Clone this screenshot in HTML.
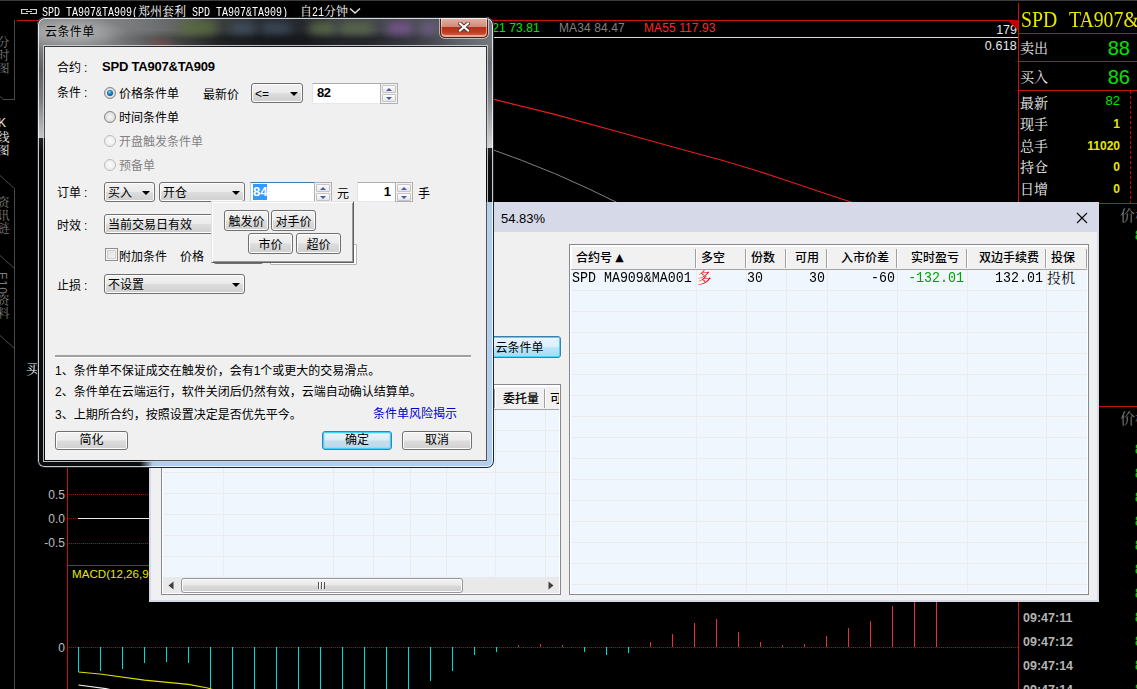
<!DOCTYPE html>
<html lang="zh-CN">
<head>
<meta charset="utf-8">
<title>云条件单</title>
<style>
*{box-sizing:border-box;margin:0;padding:0}
html,body{width:1137px;height:689px;overflow:hidden;background:#000}
body{position:relative;font-family:"Liberation Sans","Noto Sans CJK SC",sans-serif;font-size:12px;color:#000}
.a{position:absolute;white-space:nowrap}
.song{font-family:"Liberation Serif","Noto Serif CJK SC",serif}
.mono{font-family:"Liberation Mono","Noto Serif CJK SC",monospace}
.ui{font-family:"Liberation Sans","Noto Sans CJK SC",sans-serif;font-size:12px;line-height:14px;color:#000}
/* ---------- main app ---------- */
#app{position:absolute;left:0;top:0;width:1137px;height:689px;background:#000;overflow:hidden}
.hl{position:absolute;height:1px}
.vl{position:absolute;width:1px}
.red{background:#c8140c}

.sl{font-family:"Liberation Mono",monospace;font-size:10px;display:inline-block;transform:scaleY(1.25);transform-origin:50% 70%;white-space:pre}
.sc{font-family:"Noto Serif CJK SC",serif;font-size:12px}
.vt{left:-5px;width:14px;writing-mode:vertical-rl;font-family:"Liberation Sans","Noto Serif CJK SC",serif;font-size:12px;line-height:14px;letter-spacing:1px}
.ax{right:1072px;font-size:12px;line-height:14px;color:#bebebe}
.dot{background:repeating-linear-gradient(90deg,#be0000 0 1px,transparent 1px 2px)}
.q1{left:1020px;font-size:14px;line-height:15px;color:#f0f0f0}
.qb{right:7px;font-size:20px;line-height:23px;color:#00e600}
.qv{right:17px;font-size:12px;line-height:14px;font-weight:bold;color:#e6e600}
.gd{left:1135px;font-size:14px;line-height:16px;font-weight:bold;color:#00c800}
.tm{left:1023px;font-size:12.5px;line-height:14px;font-weight:bold;color:#b4b4b4}
/* ---------- light panel ---------- */
#panel{position:absolute;left:149px;top:202px;width:950px;height:400px;background:#d5d9e8;overflow:hidden}
#pbody{position:absolute;left:2px;top:30px;width:946px;height:368px;background:#f0f0f0}
.grid{position:absolute;background:#f0f6fd;border:1px solid #868a90;overflow:hidden}
.grid:after{content:"";position:absolute;left:0;top:0;right:0;bottom:0;border:1px solid #fff;border-top:0;pointer-events:none}
.gh{position:absolute;left:0;top:0;right:0;height:25px;background:#f1f1f1;border-bottom:1px solid #a3a3a3;box-shadow:inset 0 2px 0 #fff,inset 2px 0 0 #fff,inset -1px 0 0 #fff}
.gh span{position:absolute;top:6px;white-space:nowrap;margin-left:-1px;font-size:12px;line-height:14px;color:#000;font-weight:500}
.gh.lg span{top:7px}
.gh i{position:absolute;top:4px;width:1px;height:19px;background:#a0a0a0;box-shadow:1px 0 0 #fff}
.row{position:absolute;left:0;right:0;height:1px;background:#ebebeb}
.col{position:absolute;top:25px;bottom:0;width:1px;background:#ebebeb}
.cell{position:absolute;top:25px;height:21px;line-height:21px;font-size:16px;color:#000}
.cell.mono{top:23px;transform:scaleY(1.12);transform-origin:50% 50%}
/* ---------- dialog ---------- */
#dlg{position:absolute;left:37px;top:17px;width:457px;height:451px;border-radius:8px 8px 7px 7px;overflow:hidden;background:#000}
#glass{position:absolute;left:0;top:0;right:0;bottom:0}
#rim{position:absolute;left:0;top:0;right:0;bottom:0;border-radius:8px 8px 7px 7px;border:1px solid #1c242e;box-shadow:inset 0 0 0 1px rgba(255,255,255,.78);pointer-events:none}
#cframe{position:absolute;left:6px;top:28px;width:445px;height:417px;border:1px solid rgba(255,255,255,.72);background:rgba(8,12,20,.62);padding:1px}
#client{position:absolute;left:8px;top:30px;width:441px;height:413px;background:#f0f0f0;overflow:hidden}
#client .a{font-size:12px;line-height:14px;color:#000}
.btn{position:absolute;border:1px solid #707070;border-radius:3px;background:linear-gradient(#f2f2f2 0%,#ebebeb 48%,#dddddd 52%,#cfcfcf 100%);box-shadow:inset 0 0 0 1px #fcfcfc;text-align:center;font-size:12px;line-height:18px;color:#000;white-space:nowrap}
.cmb{position:absolute;border:1px solid #707070;border-radius:3px;background:linear-gradient(#f2f2f2 0%,#ebebeb 48%,#dddddd 52%,#cfcfcf 100%);box-shadow:inset 0 0 0 1px #fcfcfc;font-size:12px;line-height:20px;color:#000;padding-left:3px;white-space:nowrap;height:20px}
.cmb:after{content:"";position:absolute;right:4px;top:8px;border-style:solid;border-color:#000 transparent transparent transparent;border-width:4.5px 4px 0 4px}
.edit{position:absolute;background:#fff;border:1px solid #e3e9ef;border-top-color:#abadb3;border-left-color:#e2e3ea;border-radius:1px;font-size:13px;font-weight:bold;line-height:18px;white-space:nowrap}
.spin{position:absolute;right:-1px;top:-1px;bottom:-1px;width:18px;border:1px solid #aeb0b5;background:#f3f3f3}
.spin i{position:absolute;left:1px;width:14px;height:8px;border:1px solid #c4c4c4;border-radius:1px;background:linear-gradient(#fdfdfd,#e6e6e6)}
.spin i:after{content:"";position:absolute;left:3px;top:1.5px;border-style:solid;border-width:0 3px 3px 3px;border-color:transparent transparent #4559ae transparent}
.spin i+i:after{border-width:3px 3px 0 3px;border-color:#4559ae transparent transparent transparent;top:2px}
.rad{position:absolute;width:12px;height:12px;border-radius:50%;border:1px solid #868788;background:radial-gradient(circle at 50% 50%,#f8f8f8 0,#e4e5e6 50%,#bfc1c4 100%)}
.rad.on:after{content:"";position:absolute;left:2px;top:2px;width:6px;height:6px;border-radius:50%;background:radial-gradient(circle at 42% 36%,#7ad6f7 0,#1a7aba 42%,#0e2c58 100%)}
.rad.dis{border-color:#bdbebf;background:radial-gradient(circle at 50% 50%,#fbfbfb 0,#f0f0f0 55%,#dfe0e1 100%)}
#closeb{position:absolute;left:403px;top:1px;width:48px;height:20px;border:1px solid #5a1810;border-top:0;border-radius:0 0 5px 5px;background:linear-gradient(#e2b4a8 0%,#d08c7c 45%,#b5301a 50%,#be3e22 75%,#d4714e 100%);box-shadow:inset 0 -1px 0 1px rgba(255,255,255,.45),0 0 0 1px rgba(255,255,255,.55)}
#closeb svg{position:absolute;left:17px;top:4px}
</style>
</head>
<body>
<div id="app">
<!-- top edge -->
<div class="hl" style="left:0;top:0;width:1137px;background:#3c3c3c"></div>
<!-- title -->
<svg class="a" style="left:20px;top:8px" width="18" height="7" viewBox="0 0 18 7" fill="none" stroke="#d2d2d2" stroke-width="1.2"><path d="M8 1.5 H1.6 V5.5 H8"/><path d="M10 1.5 H16.4 V5.5 H10"/><path d="M6 3.5 H12" stroke-width="1"/></svg>
<div class="a" id="ttl" style="left:42px;top:4px;height:14px;line-height:14px;color:#fff;font-size:12px"><span class="sl">SPD TA907&amp;TA909(</span><span class="sc">郑州套利</span><span class="sl"> SPD TA907&amp;TA909)  </span><span class="sc">自</span><span class="sl">21</span><span class="sc">分钟</span></div>
<svg class="a" style="left:349px;top:7px" width="12" height="8" viewBox="0 0 12 8"><path d="M1 1.5 L6 6 L11 1.5" fill="none" stroke="#e6e6e6" stroke-width="1.4"/></svg>
<!-- left tabs -->
<div class="vl" style="left:14px;top:20px;height:80px;background:#4a4a4a"></div>
<div class="hl" style="left:3px;top:99px;width:12px;background:#4a4a4a"></div>
<svg class="a" style="left:0;top:90px" width="16" height="600" viewBox="0 0 16 600" fill="none" stroke="#4a4a4a" stroke-width="1"><path d="M0 6.5 L3.5 9.5"/><path d="M0 85.5 L14.5 98.5 L14.5 600"/><path d="M0 165.5 L14.5 178.5"/><path d="M0 245.5 L14.5 258.5"/></svg>
<div class="a vt" style="top:36px;color:#7d7d7d">分时图</div>
<div class="a vt" style="top:116px;color:#ececec;text-orientation:upright">K线图</div>
<div class="a vt" style="top:196px;color:#7d7d7d">资讯链</div>
<div class="a vt" style="top:272px;color:#7d7d7d;letter-spacing:.6px">F10资料</div>
<div class="a song" style="left:26px;top:363px;font-size:14px;line-height:14px;color:#f0f0f0">买入</div>
<!-- chart frame -->
<div class="hl red" style="left:17px;top:20px;width:1002px"></div>
<div class="vl red" style="left:67px;top:20px;height:669px"></div>
<div class="hl" style="left:68px;top:37px;width:950px;background:#dcdcdc"></div>
<div class="a" style="left:474px;top:21px;font-size:12px;line-height:14px;color:#00e600;letter-spacing:.1px">MA21 73.81</div>
<div class="a" style="left:559px;top:21px;font-size:12px;line-height:14px;color:#808080;letter-spacing:.1px">MA34 84.47</div>
<div class="a" style="left:644px;top:21px;font-size:12px;line-height:14px;color:#ff2828;letter-spacing:.1px">MA55 117.93</div>
<div class="a" style="right:120px;top:23px;font-size:12.5px;line-height:14px;color:#e8e8e8">179</div>
<div class="a" style="right:120px;top:39px;font-size:12.5px;line-height:14px;color:#e8e8e8;letter-spacing:.2px">0.618</div>
<svg class="a" style="left:1007px;top:20px" width="12" height="12" viewBox="0 0 12 12"><path d="M0 0 L12 0 L12 11 Z" fill="#c80000"/></svg>
<svg class="a" style="left:0;top:0" width="1137" height="689" viewBox="0 0 1137 689" fill="none">
<path d="M440 87 L494 99.4 L554.8 114.4 L621.7 132.8 L688.5 151.2 L722 160.2 L755.4 170.2 L788.8 181.3 L822.2 192.6 L860 205" stroke="#e61e1e" stroke-width="1.1"/>
<path d="M440 132 L494 150.2 L521.4 160.2 L554.8 173.6 L588.3 188.6 L620 204" stroke="#808080" stroke-width="1"/>
</svg>
<!-- sub chart 1 -->
<div class="a ax" style="top:488px">0.5</div>
<div class="a ax" style="top:512px">0.0</div>
<div class="a ax" style="top:536px">-0.5</div>
<div class="hl dot" style="left:69px;top:494px;width:949px"></div>
<div class="hl dot" style="left:69px;top:543px;width:949px"></div>
<div class="hl dot" style="left:69px;top:518px;width:9px"></div>
<div class="hl" style="left:78px;top:518px;width:940px;background:#e6e6e6"></div>
<div class="hl red" style="left:68px;top:565px;width:951px"></div>
<div class="a" style="left:72px;top:567px;font-size:11.6px;line-height:14px;color:#e6e600;letter-spacing:0">MACD(12,26,9)</div>
<div class="a ax" style="top:641px">0</div>
<div class="hl dot" style="left:69px;top:647px;width:949px"></div>
<svg class="a" style="left:0;top:0" width="1137" height="689" viewBox="0 0 1137 689" shape-rendering="crispEdges">
<rect x="78" y="647" width="1" height="25" fill="#00dcdc"/><rect x="100" y="647" width="1" height="24" fill="#00dcdc"/><rect x="122" y="647" width="1" height="22" fill="#00dcdc"/><rect x="144" y="647" width="1" height="16" fill="#00dcdc"/><rect x="166" y="647" width="1" height="15" fill="#00dcdc"/><rect x="188" y="647" width="1" height="16" fill="#00dcdc"/><rect x="210" y="647" width="1" height="42" fill="#00dcdc"/><rect x="232" y="647" width="1" height="42" fill="#00dcdc"/><rect x="254" y="647" width="1" height="42" fill="#00dcdc"/><rect x="276" y="647" width="1" height="42" fill="#00dcdc"/><rect x="298" y="647" width="1" height="42" fill="#00dcdc"/><rect x="320" y="647" width="1" height="42" fill="#00dcdc"/><rect x="342" y="647" width="1" height="42" fill="#00dcdc"/><rect x="364" y="647" width="1" height="42" fill="#00dcdc"/><rect x="386" y="647" width="1" height="42" fill="#00dcdc"/><rect x="408" y="647" width="1" height="42" fill="#00dcdc"/><rect x="430" y="647" width="1" height="34" fill="#00dcdc"/><rect x="452" y="647" width="1" height="24" fill="#00dcdc"/><rect x="474" y="647" width="1" height="8" fill="#00dcdc"/><rect x="496" y="647" width="1" height="5" fill="#00dcdc"/><rect x="518" y="645" width="1" height="2" fill="#e63232"/><rect x="540" y="644" width="1" height="3" fill="#e63232"/><rect x="562" y="645" width="1" height="2" fill="#e63232"/><rect x="584" y="647" width="1" height="5" fill="#00dcdc"/><rect x="606" y="647" width="1" height="8" fill="#00dcdc"/><rect x="628" y="647" width="1" height="6" fill="#00dcdc"/><rect x="650" y="642" width="1" height="5" fill="#e63232"/><rect x="672" y="634" width="1" height="13" fill="#e63232"/><rect x="694" y="623" width="1" height="24" fill="#e63232"/><rect x="716" y="619" width="1" height="28" fill="#e63232"/><rect x="738" y="632" width="1" height="15" fill="#e63232"/><rect x="760" y="642" width="1" height="5" fill="#e63232"/><rect x="782" y="645" width="1" height="2" fill="#e63232"/><rect x="804" y="644" width="1" height="3" fill="#e63232"/><rect x="826" y="636" width="1" height="11" fill="#e63232"/><rect x="848" y="628" width="1" height="19" fill="#e63232"/><rect x="870" y="621" width="1" height="26" fill="#e63232"/><rect x="892" y="606" width="1" height="41" fill="#e63232"/><rect x="914" y="590" width="1" height="57" fill="#e63232"/><rect x="936" y="580" width="1" height="67" fill="#e63232"/>
<path d="M78.5 672 L100 674 L144.4 680.2 L188.4 684.4 L207.8 688 L214 690" fill="none" stroke="#dcdc00" stroke-width="1.2" shape-rendering="auto"/><path d="M78.5 685 L105.7 688.6 L112 690" fill="none" stroke="#f0f0f0" stroke-width="1.2" shape-rendering="auto"/>
</svg>
<!-- right quote panel -->
<div class="vl red" style="left:1018px;top:3px;height:686px"></div>
<div class="hl red" style="left:1018px;top:33px;width:119px"></div>
<div class="hl red" style="left:1018px;top:61px;width:119px"></div>
<div class="hl red" style="left:1018px;top:90px;width:119px"></div>
<div class="hl red" style="left:1018px;top:203px;width:119px"></div>
<div class="hl red" style="left:1018px;top:406px;width:119px"></div>
<div class="vl" style="left:1130px;top:91px;height:112px;background:repeating-linear-gradient(#c80000 0 3px,transparent 3px 5px)"></div>
<div class="a song" id="qname" style="left:1021px;top:6.5px;font-size:23px;line-height:26px;color:#e6e600;transform:scaleX(.86);transform-origin:0 0;word-spacing:8.2px">SPD TA907&amp;TA909</div>
<div class="a song q1" style="top:41px">卖出</div>
<div class="a song q1" style="top:70px">买入</div>
<div class="a qb" style="top:37px">88</div>
<div class="a qb" style="top:66px">86</div>
<div class="a song q1" style="top:96px">最新</div>
<div class="a song q1" style="top:117px">现手</div>
<div class="a song q1" style="top:139px">总手</div>
<div class="a song q1" style="top:160px">持仓</div>
<div class="a song q1" style="top:182px">日增</div>
<div class="a qv" style="top:94px;color:#00e600;font-weight:normal;font-size:13px">82</div>
<div class="a qv" style="top:117px">1</div>
<div class="a qv" style="top:139px">11020</div>
<div class="a qv" style="top:160px">0</div>
<div class="a qv" style="top:182px">0</div>
<div class="a song" style="left:1120px;top:209px;font-size:15px;line-height:15px;color:#808080">价格</div>
<div class="a song" style="left:1120px;top:412px;font-size:15px;line-height:15px;color:#808080">价格</div>
<div class="a gd" style="top:227px">8</div>
<div class="a gd" style="top:441px">8</div><div class="a gd" style="top:465px">8</div><div class="a gd" style="top:489px">8</div><div class="a gd" style="top:513px">8</div><div class="a gd" style="top:537px">8</div><div class="a gd" style="top:561px">8</div><div class="a gd" style="top:585px">8</div><div class="a gd" style="top:609px">8</div><div class="a gd" style="top:633px">8</div><div class="a gd" style="top:657px">8</div><div class="a gd" style="top:681px">8</div>
<div class="a tm" style="top:611px">09:47:11</div>
<div class="a tm" style="top:635px">09:47:12</div>
<div class="a tm" style="top:659px">09:47:14</div>
<div class="a tm" style="top:683px">09:47:14</div>
</div>
<div id="panel">
<div id="pbody"></div>
<div class="a" style="left:352px;top:9px;font-size:13px;line-height:15px;color:#000">54.83%</div>
<svg class="a" style="left:927px;top:10px" width="12" height="12" viewBox="0 0 12 12"><path d="M1 1 L11 11 M11 1 L1 11" stroke="#000" stroke-width="1.1" fill="none"/></svg>
<div class="a" style="left:329px;top:134px;width:83px;height:22px;border:1px solid #3c7fb1;border-radius:3px;background:linear-gradient(#eaf6fd 0%,#d9f0fc 48%,#bee6fd 52%,#a7d9f5 100%);box-shadow:inset 0 0 0 1px #47d5fb;text-align:center;font-size:12px;line-height:22px;color:#000">云条件单</div>
<div class="grid" style="left:12px;top:182px;width:400px;height:211px"><div class="gh lg"><i style="left:332px"></i><i style="left:382px"></i><span style="left:10px">合约号</span><span style="left:80px">买卖</span><span style="left:180px">开平</span><span style="left:220px">状态</span><span style="left:256px">委托价</span><span style="left:342px">委托量</span><span style="left:389px">可撤</span></div><div class="col" style="left:61px"></div><div class="col" style="left:171px"></div><div class="col" style="left:211px"></div><div class="col" style="left:248px"></div><div class="col" style="left:284px"></div><div class="col" style="left:333px"></div><div class="col" style="left:383px"></div><div class="row" style="top:45px"></div><div class="row" style="top:66px"></div><div class="row" style="top:87px"></div><div class="row" style="top:108px"></div><div class="row" style="top:129px"></div><div class="row" style="top:150px"></div><div class="row" style="top:171px"></div><div class="a" style="left:0;top:192px;width:398px;height:17px;background:#e9e9e9"></div><svg class="a" style="left:6px;top:196px" width="6" height="9" viewBox="0 0 6 9"><path d="M5.5 0.5 L5.5 8.5 L0.5 4.5 Z" fill="#404040"/></svg><svg class="a" style="left:386px;top:196px" width="6" height="9" viewBox="0 0 6 9"><path d="M0.5 0.5 L0.5 8.5 L5.5 4.5 Z" fill="#404040"/></svg><div class="a" style="left:19px;top:193px;width:282px;height:15px;border:1px solid #979797;border-radius:3px;background:linear-gradient(#f3f3f3 0%,#e9e9e9 48%,#d9d9d9 52%,#cfcfcf 100%);box-shadow:inset 0 0 0 1px #fafafa"></div><div class="a" style="left:156px;top:197px;width:7px;height:7px;background:repeating-linear-gradient(90deg,#555 0 1px,#fff 1px 2px,transparent 2px 3px)"></div></div>
<div class="grid" style="left:420px;top:42px;width:520px;height:351px"><div class="gh"><i style="left:125px"></i><i style="left:175px"></i><i style="left:215px"></i><i style="left:256px"></i><i style="left:326px"></i><i style="left:396px"></i><i style="left:475px"></i><i style="left:516px"></i><span style="left:7px">合约号 <b style="font-size:11px;font-weight:normal;position:relative;top:-1px;font-family:'DejaVu Sans',sans-serif">▲</b></span><span style="left:132px">多空</span><span style="left:182px">份数</span><span style="left:226px">可用</span><span style="left:272px">入市价差</span><span style="left:342px">实时盈亏</span><span style="left:410px">双边手续费</span><span style="left:482px">投保</span></div><div class="col" style="left:126px"></div><div class="col" style="left:176px"></div><div class="col" style="left:216px"></div><div class="col" style="left:257px"></div><div class="col" style="left:327px"></div><div class="col" style="left:397px"></div><div class="col" style="left:476px"></div><div class="row" style="top:45px"></div><div class="row" style="top:66px"></div><div class="row" style="top:87px"></div><div class="row" style="top:108px"></div><div class="row" style="top:129px"></div><div class="row" style="top:150px"></div><div class="row" style="top:171px"></div><div class="row" style="top:192px"></div><div class="row" style="top:213px"></div><div class="row" style="top:234px"></div><div class="row" style="top:255px"></div><div class="row" style="top:276px"></div><div class="row" style="top:297px"></div><div class="row" style="top:318px"></div><div class="row" style="top:339px"></div><div class="cell mono" style="left:2px;font-size:13.3px;letter-spacing:0">SPD MA909&amp;MA001</div><div class="cell song" style="left:127px;color:#f00000;font-size:14.5px;top:23px;margin-left:0px">多</div><div class="cell mono" style="left:177px;font-size:13.3px">30</div><div class="cell mono" style="right:263px;font-size:13.3px">30</div><div class="cell mono" style="right:193px;font-size:13.3px">-60</div><div class="cell mono" style="right:124px;font-size:13.3px;color:#00a000">-132.01</div><div class="cell mono" style="right:45px;font-size:13.3px">132.01</div><div class="cell song" style="left:477px;font-size:14px;top:23px">投机</div></div>
</div>
<div id="dlg">
<div id="glass">
<div class="a" style="left:0;top:0;width:457px;height:30px;background:linear-gradient(90deg,#86888a 0,#898b8c 50px,#7e8082 80px,#6f7173 115px,#5c605c 150px,#3a3e3c 185px,#282b30 225px,#25282d 265px,#3f4248 300px,#4b4e54 380px,#63666c 430px,#777a7e 457px)"></div>
<div class="a" style="left:0;top:0;width:457px;height:30px;background:linear-gradient(rgba(12,14,18,0) 0,rgba(12,14,18,0) 45%,rgba(12,14,18,.62) 72%,rgba(12,14,18,.5) 100%);-webkit-mask-image:linear-gradient(90deg,rgba(0,0,0,0) 70px,#000 180px,#000 330px,rgba(0,0,0,0) 420px);mask-image:linear-gradient(90deg,rgba(0,0,0,0) 70px,#000 180px,#000 330px,rgba(0,0,0,0) 420px)"></div>
<div class="a" style="left:0;top:0;width:120px;height:30px;background:radial-gradient(ellipse 58px 15px at 32px 15px,rgba(255,255,255,.42),rgba(255,255,255,0) 100%)"></div>
<div class="a" style="left:143px;top:5px;width:35px;height:12px;background:#5a6e3a;filter:blur(5px);opacity:.8"></div>
<div class="a" style="left:195px;top:6px;width:23px;height:10px;background:#44566c;filter:blur(4px);opacity:.8"></div>
<div class="a" style="left:225px;top:6px;width:28px;height:10px;background:#44566c;filter:blur(4px);opacity:.7"></div>
<div class="a" style="left:273px;top:6px;width:25px;height:11px;background:#5f7048;filter:blur(4px);opacity:.85"></div>
<div class="a" style="left:303px;top:6px;width:32px;height:11px;background:#5f7048;filter:blur(4px);opacity:.8"></div>
<div class="a" style="left:351px;top:6px;width:24px;height:11px;background:#8656a0;filter:blur(4px);opacity:.75"></div>
<div class="a" style="left:383px;top:6px;width:16px;height:11px;background:#775c92;filter:blur(4px);opacity:.7"></div>
<div class="a" style="left:113px;top:24px;width:22px;height:6px;background:#a04848;filter:blur(4px);opacity:.6"></div>
<div class="a" style="left:0;top:30px;width:8px;height:91px;background:linear-gradient(#7e8082 0,#5e6062 26%,#7c7e80 58%,#c6c8ca 100%)"></div>
<div class="a" style="left:0;top:121px;width:8px;height:330px;background:linear-gradient(#202326 0,#0b0d0f 14px,#0b0d0f 100%)"></div>
<div class="a" style="left:449px;top:30px;width:8px;height:101px;background:linear-gradient(#707274 0,#66686b 15%,#85878a 50%,#d2d4d6 100%)"></div>
<div class="a" style="left:449px;top:131px;width:8px;height:54px;background:linear-gradient(#202326 0,#0b0d0f 14px,#0b0d0f 100%)"></div>
<div class="a" style="left:449px;top:185px;width:8px;height:266px;background:#b0cff0"></div>
<div class="a" style="left:0;top:443px;width:457px;height:8px;background:linear-gradient(90deg,#0b0d0f 0,#0b0d0f 103px,#b0cff0 116px,#b0cff0 100%)"></div>
</div>
<div id="cframe"></div>
<div class="a" style="left:8px;top:7px;font-size:12px;line-height:16px;color:#000;letter-spacing:.4px">云条件单</div>
<div id="closeb"><svg width="12" height="10" viewBox="0 0 12 10"><path d="M2 1.5 L10 8.5 M10 1.5 L2 8.5" stroke="#4a3436" stroke-width="3.8" stroke-linecap="square"/><path d="M2 1.5 L10 8.5 M10 1.5 L2 8.5" stroke="#fff" stroke-width="2.1" stroke-linecap="square"/></svg></div>
<div id="client">
<div class="a" style="left:12px;top:13.5px;">合约<span style="margin-left:3px">:</span></div>
<div class="a" style="left:57px;top:12px;font-size:13px;line-height:16px;font-weight:bold;letter-spacing:-.2px">SPD TA907&amp;TA909</div>
<div class="a" style="left:12px;top:38.5px;">条件<span style="margin-left:3px">:</span></div>
<div class="rad on" style="left:59px;top:40px"></div>
<div class="a" style="left:74px;top:40px;">价格条件单</div>
<div class="rad " style="left:59px;top:64px"></div>
<div class="a" style="left:74px;top:64px;">时间条件单</div>
<div class="rad dis" style="left:59px;top:88px"></div>
<div class="a" style="left:74px;top:88px;color:#838383">开盘触发条件单</div>
<div class="rad dis" style="left:59px;top:112px"></div>
<div class="a" style="left:74px;top:112px;color:#838383">预备单</div>
<div class="a" style="left:158px;top:41px;">最新价</div>
<div class="cmb" style="left:206px;top:36px;width:52px">&lt;=</div>
<div class="edit" style="left:267px;top:36px;width:86px;height:21px;padding-left:4px;letter-spacing:-.4px">82<div class="spin"><i style="top:1px"></i><i style="top:10px"></i></div></div>
<div class="a" style="left:12px;top:139px;">订单<span style="margin-left:3px">:</span></div>
<div class="cmb" style="left:59px;top:135px;width:51px">买入</div>
<div class="cmb" style="left:114px;top:135px;width:86px">开仓</div>
<div class="edit" style="left:205px;top:135px;width:82px;height:20px;padding-left:2px;border-color:#3d7bad #a4c9e3 #b7d9ed #b5cfe7"><span style="display:inline-block;background:#3399ff;color:#fff;height:16px;line-height:16px;margin-top:1px;font-weight:bold;letter-spacing:0;padding:0">84</span><div class="spin"><i style="top:1px"></i><i style="top:10px"></i></div></div>
<div class="a" style="left:292px;top:139.5px;">元</div>
<div class="edit" style="left:312px;top:135px;width:56px;height:20px;text-align:right;padding-right:21px">1<div class="spin"><i style="top:1px"></i><i style="top:10px"></i></div></div>
<div class="a" style="left:373px;top:139.5px;">手</div>
<div class="a" style="left:12px;top:171.5px;">时效<span style="margin-left:3px">:</span></div>
<div class="cmb" style="left:59px;top:167px;width:141px">当前交易日有效</div>
<div class="a" style="left:60px;top:201px;width:13px;height:13px;border:1px solid #8e8f8f;background:linear-gradient(135deg,#dcdddd,#f6f6f6);box-shadow:inset 0 0 0 1px #f4f4f4, inset 0 0 0 2px #cfd0d0"></div>
<div class="a" style="left:74px;top:202.5px;">附加条件</div>
<div class="a" style="left:135px;top:202.5px;">价格</div>
<div class="cmb" style="left:168px;top:197px;width:51px"></div>
<div class="edit" style="left:225px;top:197px;width:87px;height:21px;border-color:#b4b6bb"></div>
<div class="a" style="left:12px;top:231.5px;">止损<span style="margin-left:3px">:</span></div>
<div class="cmb" style="left:59px;top:227px;width:141px">不设置</div>
<div class="a" style="left:166px;top:154px;width:143px;height:62px;background:#f0f0f0;border:1px solid;border-color:#e3e3e3 #5f5f5f #5f5f5f #e3e3e3;box-shadow:inset 1px 1px 0 #fff, inset -1px -1px 0 #9a9a9a"></div>
<div class="btn" style="left:179px;top:163px;width:45px;height:21px;line-height:22px">触发价</div>
<div class="btn" style="left:226px;top:163px;width:45px;height:21px;line-height:22px">对手价</div>
<div class="btn" style="left:203px;top:186px;width:45px;height:21px;line-height:22px">市价</div>
<div class="btn" style="left:251px;top:186px;width:45px;height:21px;line-height:22px">超价</div>
<div class="a" style="left:10px;top:308px;width:416px;height:3px;background:#a0a0a0;border-bottom:1px solid #fff"></div>
<div class="a" style="left:10px;top:317.3px;">1、条件单不保证成交在触发价，会有1个或更大的交易滑点。</div>
<div class="a" style="left:10px;top:338.4px;">2、条件单在云端运行，软件关闭后仍然有效，云端自动确认结算单。</div>
<div class="a" style="left:10px;top:360.5px;">3、上期所合约，按照设置决定是否优先平今。</div>
<div class="a" style="left:328px;top:360.3px;color:#0000c8">条件单风险揭示</div>
<div class="btn" style="left:10px;top:384px;width:73px;height:19px;line-height:17px">简化</div>
<div class="btn" style="left:277px;top:384px;width:70px;height:19px;line-height:17px;border-color:#3c7fb1;background:linear-gradient(#edf5fa 0%,#dcebf4 48%,#c6deec 52%,#bdd7e7 100%);box-shadow:inset 0 0 0 1px #40d2f8,inset 0 0 0 2px rgba(120,220,250,.45)">确定</div>
<div class="btn" style="left:357px;top:384px;width:70px;height:19px;line-height:17px">取消</div>
</div>
<div id="rim"></div>
</div>
</body>
</html>
